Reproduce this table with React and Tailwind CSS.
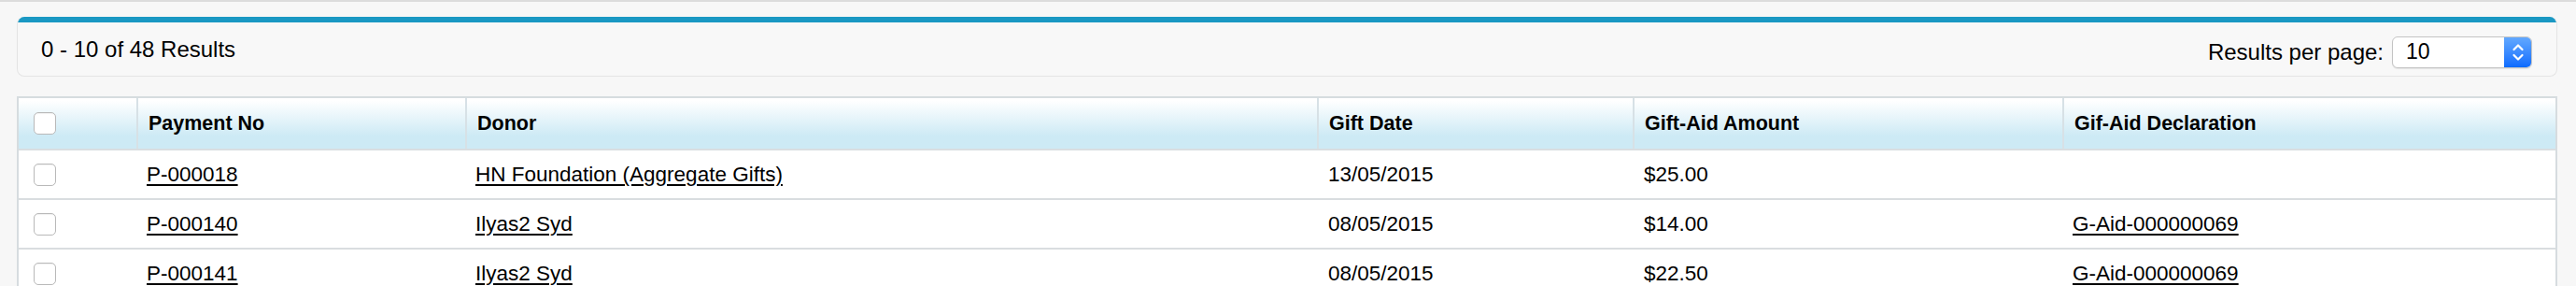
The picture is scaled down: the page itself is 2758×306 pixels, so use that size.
import React from "react";

const COLS = [
  { key: "check", w: "w-[126px]" },
  { key: "no", label: "Payment No", w: "w-[352px]" },
  { key: "donor", label: "Donor", w: "w-[912px]" },
  { key: "date", label: "Gift Date", w: "w-[338px]" },
  { key: "amount", label: "Gift-Aid Amount", w: "w-[460px]" },
  { key: "decl", label: "Gif-Aid Declaration", w: "flex-1" },
];

const ROWS = [
  { no: "P-000018", donor: "HN Foundation (Aggregate Gifts)", date: "13/05/2015", amount: "$25.00", decl: "" },
  { no: "P-000140", donor: "Ilyas2 Syd", date: "08/05/2015", amount: "$14.00", decl: "G-Aid-000000069" },
  { no: "P-000141", donor: "Ilyas2 Syd", date: "08/05/2015", amount: "$22.50", decl: "G-Aid-000000069" },
];

function Checkbox() {
  return (
    <span className="block h-[24px] w-[24px] rounded-[5px] border border-[#b9b9b9] bg-white shadow-[inset_0_1px_1px_rgba(0,0,0,0.06)]" />
  );
}

function Stepper() {
  return (
    <span className="flex h-full w-[29px] items-center justify-center rounded-r-[5px] bg-linear-to-b from-[#62a8ff] to-[#0a6bff]">
      <svg width="14" height="22" viewBox="0 0 14 22" fill="none" stroke="white" strokeWidth="2.2" strokeLinecap="round" strokeLinejoin="round">
        <path d="M2.5 8 L7 3.5 L11.5 8" />
        <path d="M2.5 14 L7 18.5 L11.5 14" />
      </svg>
    </span>
  );
}

export default function App() {
  return (
    <div
      className="min-h-[306px] w-full overflow-hidden border-t-2 border-[#dcdcdc] bg-[#f7f7f7] pl-[18px] pr-[20px] text-black"
      style={{ fontFamily: '"Liberation Sans", Arial, sans-serif' }}
    >
      {/* results bar */}
      <div className="mt-[16px] overflow-hidden rounded-[8px] border border-t-0 border-[#e4e4e4] bg-[#f8f8f8] text-[24px]">
        <div className="h-[6px] bg-[#1a98c3]" />
        <div className="flex h-[57px] items-center justify-between pl-[25px] pr-[26px]">
          <span>0 - 10 of 48 Results</span>
          <div className="flex items-center gap-[9px] pt-[6px]">
            <span>Results per page:</span>
            <div className="flex h-[34px] w-[150px] items-stretch rounded-[6px] border border-[#c4c4c4] bg-white text-[23px] shadow-[0_1px_1px_rgba(0,0,0,0.08)]">
              <span className="flex flex-1 items-center pl-[14px]">10</span>
              <Stepper />
            </div>
          </div>
        </div>
      </div>

      {/* table */}
      <div className="mt-[21px] border-2 border-b-0 border-[#d6dcdf] bg-white text-[22.5px]">
        <div className="flex h-[56px] border-b-2 border-[#d9dee1] bg-linear-to-b from-white from-5% to-[#cdeaf5] to-75% text-[21.5px] font-bold">
          {COLS.map((c, i) => (
            <div
              key={c.key}
              className={`${c.w} flex items-center ${i > 0 ? "border-l-2 border-[#d7e1e6] pl-[11px]" : "pl-[16px]"}`}
            >
              {c.key === "check" ? <Checkbox /> : c.label}
            </div>
          ))}
        </div>
        {ROWS.map((r, idx) => (
          <div key={idx} className="flex h-[53px] border-b-2 border-[#d9dde0]">
            <div className="flex w-[126px] items-center pl-[16px]">
              <Checkbox />
            </div>
            <div className="flex w-[352px] items-center pl-[11px]">
              <a className="underline underline-offset-[3px]">{r.no}</a>
            </div>
            <div className="flex w-[912px] items-center pl-[11px]">
              <a className="underline underline-offset-[3px]">{r.donor}</a>
            </div>
            <div className="flex w-[338px] items-center pl-[12px]">{r.date}</div>
            <div className="flex w-[460px] items-center pl-[12px]">{r.amount}</div>
            <div className="flex flex-1 items-center pl-[11px]">
              {r.decl && <a className="underline underline-offset-[3px]">{r.decl}</a>}
            </div>
          </div>
        ))}
      </div>
    </div>
  );
}
